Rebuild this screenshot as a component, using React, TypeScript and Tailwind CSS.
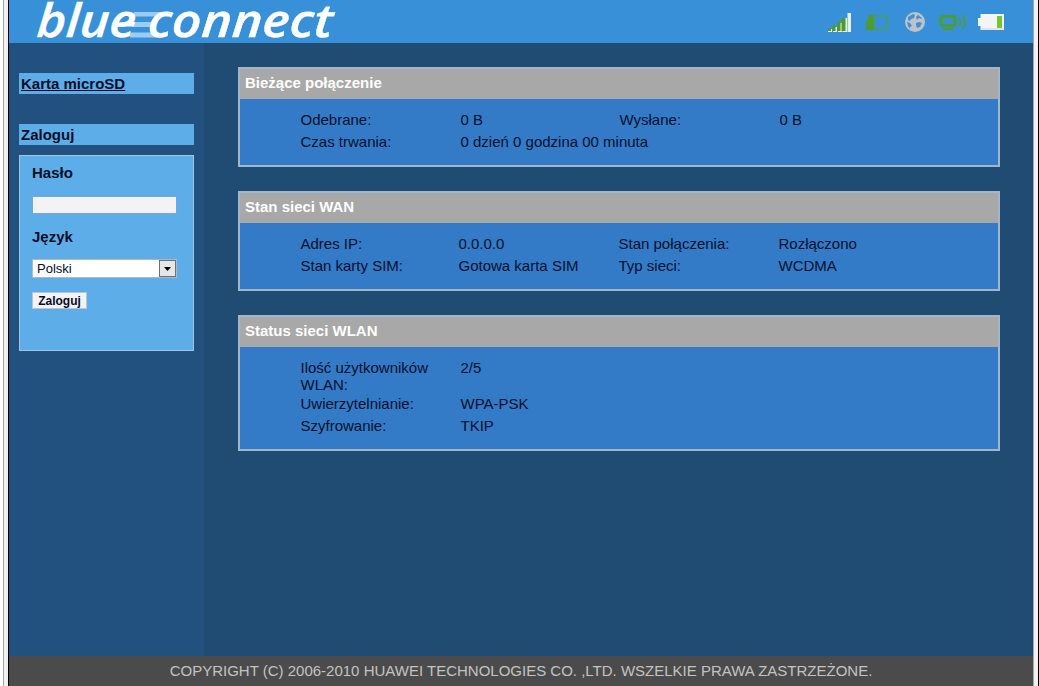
import { ReactNode } from 'react';

interface PanelProps {
  title: string;
  children: ReactNode;
  className?: string;
}

function Panel({ title, children, className = '' }: PanelProps) {
  return (
    <section className={`border-2 border-[#a3b6c9] bg-[#337bc6] ${className}`}>
      <h2 className="h-[30px] bg-[#a8a8a8] pl-[5px] text-[15px] leading-[28px] font-bold text-white">
        {title}
      </h2>
      <div className="pt-[12px] pl-[60.5px]">{children}</div>
    </section>
  );
}

interface RowProps {
  cells: string[];
  className?: string;
}

function Row({ cells, className = 'h-[22px] grid-cols-[160px_159px_160px_1fr]' }: RowProps) {
  return (
    <div className={`grid text-[15px] leading-[17px] text-[#04102e] ${className}`}>
      {cells.map((cell, i) => (
        <span key={i} className={i === 0 ? 'pr-5' : 'whitespace-nowrap'}>
          {cell}
        </span>
      ))}
    </div>
  );
}

function Logo() {
  return (
    <svg width="310" height="43" viewBox="0 0 310 43" className="ml-[27px] overflow-visible">
      <g fill="#9ccbf3">
        <path d="M98 12h36l-6 4.500H97z" />
        <path d="M97 22h22l-2 5H96z" />
        <path d="M95 32.500h22l4 5H94z" />
      </g>
      <g
        className="font-['Open_Sans','Noto_Sans',sans-serif] font-semibold italic"
        fill="#fff"
        stroke="#fff"
        strokeWidth="0.4"
        fontSize="46"
        transform="translate(0 37) skewX(-4)"
      >
        <text x="0" y="0" textLength="99" lengthAdjust="spacingAndGlyphs">blue</text>
        <text x="111" y="0" textLength="185" lengthAdjust="spacingAndGlyphs">connect</text>
      </g>
      {/* crossbar of the e running into the stripes */}
      <path d="M86 22h13l-1 4.500H85z" fill="#fff" />
    </svg>
  );
}

function StatusIcons() {
  return (
    <svg width="180" height="25" viewBox="0 0 180 25" className="mr-[27px]">
      {/* signal */}
      <path fill="#e6efe2" d="M2 20h4v3H2zM7 18h4v5H7zM12 14h4v9h-4zM16.500 9h4.500v14h-4.500zM21.500 4H25v19h-3.500z" />
      <path fill="#4e9b26" d="M2 19h3v3H2zM6.500 17h3v5h-3zM11 13h3.500v9H11zM15.500 9h4v13h-4z" />
      {/* sim */}
      <path d="M43 6h6v15h-9v-7z" fill="#4c9d30" />
      <rect x="48" y="7" width="13" height="13" fill="none" stroke="#4c9d58" strokeWidth="1.500" />
      {/* globe */}
      <circle cx="89" cy="13" r="10" fill="#bdc3c8" />
      <path
        d="M82 8l5-3 2 1-1 3-3 1-1 2-2-1zM92 6l4 3-1 1-2-1-2 2-1-3zM81 13l3 1 2 3-2 1v2l-2-3zM90 14l3-1 3 1-2 4-3 1-1-3z"
        fill="#4390d0"
      />
      {/* wlan */}
      <rect x="115" y="7.500" width="14" height="9" rx="2" fill="none" stroke="#4c9d30" strokeWidth="3" />
      <path d="M117 19h10v2h-10z" fill="#4c9d30" />
      <path d="M133 9q3 4 0 8M136.500 6q5 7 0 14" fill="none" stroke="#4c9d38" strokeWidth="1.800" />
      {/* battery */}
      <path d="M152 9h2.500V5H178v16h-23.500v-4H152z" fill="#f3f4f5" />
      <path d="M155 19.500h22.500v1H155z" fill="#cfd6dc" />
      <path d="M171 7h5v12h-5z" fill="#72c82c" />
    </svg>
  );
}

const WAN_GRID = 'h-[22px] grid-cols-[158px_160px_160px_1fr]';

export default function App() {
  return (
    <div className="flex h-[686px] w-[1039px] overflow-hidden bg-white font-['Liberation_Sans',Arial,sans-serif]">
      <div className="w-[9px] shrink-0 border-r border-black bg-[#f1f1f1]">
        <div className="h-full w-[4px] border-r border-[#a5a5a5] bg-white" />
      </div>
      <div className="flex w-[1024px] shrink-0 flex-col">
        <header className="flex h-[43px] shrink-0 items-center justify-between bg-[#3890d8]">
          <Logo />
          <StatusIcons />
        </header>
        <div className="flex flex-1 bg-[#204c74]">
          <aside className="w-[195px] shrink-0 bg-[#225180] pt-[30px] pl-[10px] text-[15px] font-bold text-[#020d26]">
            <a className="block h-[21px] w-[175px] bg-[#5dade9] pl-[2px] leading-[21px] underline">Karta microSD</a>
            <div className="mt-[30px] h-[21px] w-[175px] bg-[#5dade9] pl-[2px] leading-[21px]">Zaloguj</div>
            <form className="mt-[10px] h-[196px] w-[175px] border border-[#a3c4dc] bg-[#5dade9] pl-[12px]">
              <label className="mt-[8px] block h-[32px] leading-[18px]">Hasło</label>
              <div className="h-[18px] w-[145px] border border-[#7ba3e4] bg-[#f3f3f3]" />
              <label className="mt-[13px] block h-[32px] leading-[20px]">Język</label>
              <div className="flex h-[19px] w-[145px] justify-between border border-[#a9b9c7] bg-white text-[13px] leading-[17px] font-normal">
                <span className="pl-[4px]">Polski</span>
                <span className="flex w-[17px] items-center justify-center border border-[#707070] bg-[#e6e6e6]">
                  <svg width="7" height="4" viewBox="0 0 7 4">
                    <path d="M0 0h7L3.500 4z" />
                  </svg>
                </span>
              </div>
              <button className="mt-[14px] block h-[17px] w-[55px] border border-[#b5c5d2] bg-[#f3f3f3] text-[12px] leading-[14px] font-bold">
                Zaloguj
              </button>
            </form>
          </aside>
          <main className="w-[797px] pt-[24px] pl-[34px]">
            <Panel title="Bieżące połączenie" className="h-[100px] w-[762px]">
              <Row cells={['Odebrane:', '0 B', 'Wysłane:', '0 B']} />
              <Row cells={['Czas trwania:', '0 dzień 0 godzina 00 minuta']} />
            </Panel>
            <Panel title="Stan sieci WAN" className="mt-[24px] h-[100px] w-[762px]">
              <Row cells={['Adres IP:', '0.0.0.0', 'Stan połączenia:', 'Rozłączono']} className={WAN_GRID} />
              <Row cells={['Stan karty SIM:', 'Gotowa karta SIM', 'Typ sieci:', 'WCDMA']} className={WAN_GRID} />
            </Panel>
            <Panel title="Status sieci WLAN" className="mt-[24px] h-[136px] w-[762px]">
              <Row cells={['Ilość użytkowników WLAN:', '2/5']} className="h-[36px] grid-cols-[160px_1fr]" />
              <Row cells={['Uwierzytelnianie:', 'WPA-PSK']} />
              <Row cells={['Szyfrowanie:', 'TKIP']} />
            </Panel>
          </main>
        </div>
        <footer className="h-[30px] shrink-0 bg-[#4b4b4b] text-center text-[15px] leading-[30px] text-[#c3c3c3]">
          COPYRIGHT (C) 2006-2010 HUAWEI TECHNOLOGIES CO. ,LTD. WSZELKIE PRAWA ZASTRZEŻONE.
        </footer>
      </div>
      <div className="w-[6px] shrink-0 border-r border-l border-r-black border-l-[#a5a5a5] bg-[#f1f1f1]" />
    </div>
  );
}
